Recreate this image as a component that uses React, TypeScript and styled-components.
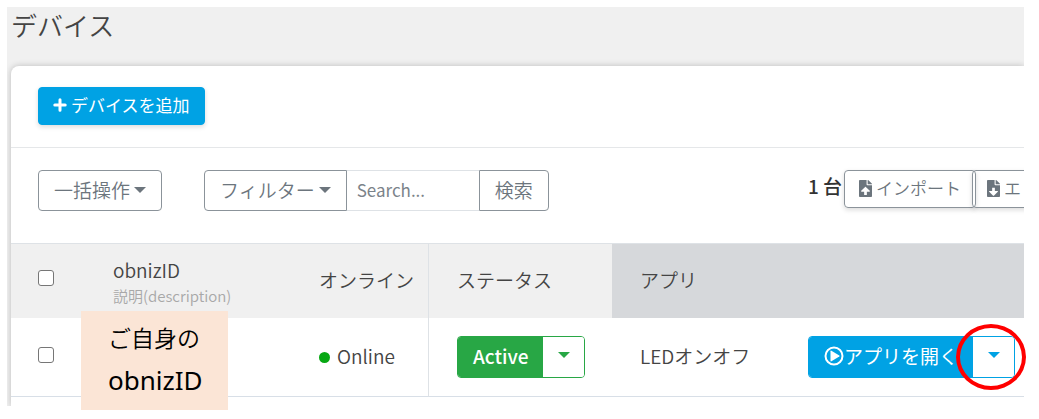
import React from 'react';
import styled, { createGlobalStyle, css } from 'styled-components';

const colors = {
  blue: '#00a2e4',
  green: '#28a745',
  slate: '#6c757d',
  line: '#dee2e6',
  text: '#444444',
};

const GlobalStyle = createGlobalStyle`
  *, *::before, *::after { box-sizing: border-box; }
  body {
    margin: 0;
    background: #fff;
    color: ${colors.text};
    font: 350 19px/28px "Noto Sans CJK JP", sans-serif;
  }
  button, input { font: inherit; margin: 0; }
`;

const Page = styled.div`
  position: relative;
  padding: 7px 15px 13px 7px;
`;

const Frame = styled.main`
  overflow: hidden;
  background: #f0f0f0;
  padding-left: 4px;
`;

const Title = styled.h1`
  margin: 0;
  height: 59px;
  font-size: 26px;
  line-height: 36px;
  font-weight: 350;
`;

const Card = styled.section`
  background: #fff;
  border-top-left-radius: 8px;
  box-shadow: 0 0 6px rgba(0, 0, 0, 0.22);
  padding-bottom: 9px;
`;

const AddBar = styled.div`
  display: flex;
  padding: 21px 27px 22px;
  border-bottom: 1px solid #e5e7e9;
`;

const Toolbar = styled.div`
  display: flex;
  align-items: flex-start;
  height: 95px;
  padding: 22px 0 0 27px;
  overflow: hidden;
`;

const Button = styled.button<{ $tone: 'solid' | 'outline'; $compact?: boolean }>`
  display: inline-flex;
  flex: none;
  align-items: center;
  white-space: nowrap;
  border: 1px solid ${(p) => (p.$tone === 'solid' ? colors.blue : '#8b939a')};
  border-radius: 4px;
  background: ${(p) => (p.$tone === 'solid' ? colors.blue : 'transparent')};
  color: ${(p) => (p.$tone === 'solid' ? '#fff' : colors.slate)};
  font-weight: ${(p) => (p.$tone === 'solid' ? 400 : 350)};
  height: 41px;
  padding: 0 15px 2px;
  gap: 4px;
  ${(p) =>
    p.$compact &&
    css`
      height: 38px;
      font-size: 17px;
      padding: 0 14px 2px;
      box-shadow: 0 2px 5px rgba(0, 0, 0, 0.14);
    `}
`;

const SearchGroup = styled.div`
  display: flex;
  margin-left: 42px;

  ${Button}:first-child { border-radius: 4px 0 0 4px; }
  ${Button}:last-child { border-radius: 0 4px 4px 0; }
`;

const SearchInput = styled.input`
  width: 132px;
  height: 41px;
  padding: 0 10px 2px;
  border: 1px solid ${colors.line};
  border-width: 1px 0;
  border-radius: 0;
  font-size: 17px;
  font-weight: 400;
  &::placeholder { color: #7b838a; opacity: 1; }
`;

const Tools = styled.div`
  display: flex;
  flex: none;
  width: 216px;
  margin-left: auto;

  ${Button} + ${Button} { margin-left: -4px; }
`;

const Count = styled.span`
  flex: none;
  width: 36px;
  white-space: nowrap;
  line-height: 32px;
  font-size: 19px;
  font-weight: 500;
  color: #333;
`;

const Caret = styled.span`
  border: 6px solid transparent;
  border-top-color: currentColor;
  border-bottom: 0;
`;

const Table = styled.table`
  width: 100%;
  table-layout: fixed;
  border-collapse: separate;
  border-spacing: 0;
`;

const HeadCell = styled.th<{ $width?: number; $tone?: string; $ruled?: boolean }>`
  width: ${(p) => (p.$width ? `${p.$width}px` : 'auto')};
  height: 75px;
  padding: 0 0 2px 28px;
  text-align: left;
  font-weight: 350;
  background: ${(p) => p.$tone ?? '#f0f0f0'};
  border-top: 1px solid ${colors.line};
  border-right: ${(p) => (p.$ruled ? `1px solid ${colors.line}` : '0')};
  &:first-child { padding-left: 27px; }
`;

const Cell = styled.td<{ $ruled?: boolean }>`
  height: 79px;
  padding: 0 0 0 28px;
  white-space: nowrap;
  border-bottom: 1px solid #d8dfe7;
  border-right: ${(p) => (p.$ruled ? `1px solid ${colors.line}` : '0')};
  &:first-child { padding-left: 27px; }
`;

const Check = styled.input`
  display: block;
  appearance: none;
  width: 16px;
  height: 16px;
  margin: 0 0 4px;
  border: 1px solid #767676;
  border-radius: 3px;
  background: #fff;
  &:checked { background: ${colors.blue}; }
`;

const ColumnTitle = styled.span`
  display: block;
  padding-top: 4px;
  line-height: 28px;
  font-size: 19px;
`;

const ColumnNote = styled.small`
  display: block;
  font-size: 15px;
  line-height: 24px;
  color: #a8a8a8;
`;

const Status = styled.span`
  display: flex;
  align-items: center;
  gap: 7px;
  padding-bottom: 2px;
`;

const Dot = styled.span`
  width: 11px;
  height: 11px;
  margin-top: 3px;
  border-radius: 50%;
  background: #07a813;
`;

const AppName = styled.span`
  display: block;
  padding-bottom: 2px;
`;

const SplitButton = styled.div<{ $color: string }>`
  display: flex;
  width: max-content;
  height: 42px;
  border: 1px solid ${(p) => p.$color};
  border-radius: 4px;
  overflow: hidden;
  background: #fff;
`;

const SplitMain = styled.button<{ $color: string; $strong?: boolean }>`
  display: flex;
  align-items: center;
  border: 0;
  padding: 0 15px 2px;
  white-space: nowrap;
  background: ${(p) => p.$color};
  color: #fff;
  font-weight: ${(p) => (p.$strong ? 500 : 400)};
`;

const SplitToggle = styled.button<{ $color: string }>`
  display: grid;
  place-items: center;
  width: 41px;
  border: 0;
  padding: 0 0 4px;
  background: #fff;
  color: ${(p) => p.$color};
`;

const Note = styled.aside`
  position: absolute;
  left: 81px;
  top: 311px;
  width: 147px;
  height: 99px;
  padding: 6px 0 0 27px;
  background: #fbe5d6;
  color: #000;
  font: 400 26px/42px "Noto Sans", "Noto Sans CJK JP", sans-serif;
`;

const NoteLine = styled.span<{ $light?: boolean }>`
  display: block;
  font-size: ${(p) => (p.$light ? 23 : 26)}px;
  font-weight: ${(p) => (p.$light ? 350 : 400)};
`;

const Highlight = styled.div`
  position: absolute;
  right: 13px;
  top: 324px;
  width: 70px;
  height: 66px;
  border: 4px solid #f00;
  border-radius: 50%;
  pointer-events: none;
`;

const PlusIcon = () => (
  <svg width="14" height="14" viewBox="0 0 14 14" aria-hidden="true">
    <path d="M7 1.8v10.4M1.8 7h10.4" stroke="currentColor" strokeWidth="3" strokeLinecap="round" />
  </svg>
);

const FileIcon = ({ down }: { down?: boolean }) => (
  <svg width="13" height="17" viewBox="0 0 384 512" preserveAspectRatio="none" aria-hidden="true">
    <path
      fill="currentColor"
      d="M224 136V0H24C10.700 0 0 10.700 0 24v464c0 13.300 10.700 24 24 24h336c13.300 0 24-10.700 24-24V160H248c-13.200 0-24-10.800-24-24zM384 122v6H256V0h6c6 0 12 2 17 7l98 98c4 4 7 11 7 17z"
    />
    <path
      fill="#fff"
      d={
        down
          ? 'M152 232h80v96h76c15 0 22 17 11 27L202 471c-6 6-15 6-21 0L65 355c-11-10-4-27 11-27h76z'
          : 'M152 448h80v-96h76c15 0 22-17 11-27L202 209c-6-6-15-6-21 0L65 325c-11 10-4 27 11 27h76z'
      }
    />
  </svg>
);

const PlayIcon = () => (
  <svg width="20" height="20" viewBox="0 0 20 20" aria-hidden="true">
    <circle cx="10" cy="10" r="8.500" fill="none" stroke="currentColor" strokeWidth="2" />
    <path d="M6.500 5.200v9.600a.6.6 0 0 0 .9.500l7.900-4.800a.6.6 0 0 0 0-1L7.400 4.700a.6.6 0 0 0-.9.500z" fill="currentColor" />
  </svg>
);

export default function App() {
  return (
    <Page>
      <GlobalStyle />
      <Frame>
        <Title>デバイス</Title>
        <Card>
          <AddBar>
            <Button $tone="solid" $compact>
              <PlusIcon />
              デバイスを追加
            </Button>
          </AddBar>
          <Toolbar>
            <Button $tone="outline">
              一括操作
              <Caret />
            </Button>
            <SearchGroup role="search">
              <Button $tone="outline">
                フィルター
                <Caret />
              </Button>
              <SearchInput type="text" placeholder="Search..." aria-label="Search" />
              <Button $tone="outline">検索</Button>
            </SearchGroup>
            <Tools>
              <Count>1 台</Count>
              <Button $tone="outline" $compact>
                <FileIcon />
                インポート
              </Button>
              <Button $tone="outline" $compact>
                <FileIcon down />
                エ
              </Button>
            </Tools>
          </Toolbar>
          <Table>
            <thead>
              <tr>
                <HeadCell $width={74}>
                  <Check type="checkbox" aria-label="Select all devices" />
                </HeadCell>
                <HeadCell $width={206}>
                  <ColumnTitle>obnizID</ColumnTitle>
                  <ColumnNote>説明(description)</ColumnNote>
                </HeadCell>
                <HeadCell $width={138} $ruled>オンライン</HeadCell>
                <HeadCell $width={183}>ステータス</HeadCell>
                <HeadCell $width={168} $tone="#d6d8db">アプリ</HeadCell>
                <HeadCell $tone="#d6d8db" aria-label="Actions" />
              </tr>
            </thead>
            <tbody>
              <tr>
                <Cell>
                  <Check type="checkbox" aria-label="Select device" />
                </Cell>
                <Cell />
                <Cell $ruled>
                  <Status>
                    <Dot />
                    Online
                  </Status>
                </Cell>
                <Cell>
                  <SplitButton $color={colors.green}>
                    <SplitMain $color={colors.green} $strong>Active</SplitMain>
                    <SplitToggle $color={colors.green} aria-label="Change status">
                      <Caret />
                    </SplitToggle>
                  </SplitButton>
                </Cell>
                <Cell>
                  <AppName>LEDオンオフ</AppName>
                </Cell>
                <Cell>
                  <SplitButton $color={colors.blue}>
                    <SplitMain $color={colors.blue}>
                      <PlayIcon />
                      アプリを開く
                    </SplitMain>
                    <SplitToggle $color={colors.blue} aria-label="More app actions">
                      <Caret />
                    </SplitToggle>
                  </SplitButton>
                </Cell>
              </tr>
            </tbody>
          </Table>
        </Card>
      </Frame>
      <Note>
        <NoteLine $light>ご自身の</NoteLine>
        <NoteLine>obnizID</NoteLine>
      </Note>
      <Highlight />
    </Page>
  );
}
